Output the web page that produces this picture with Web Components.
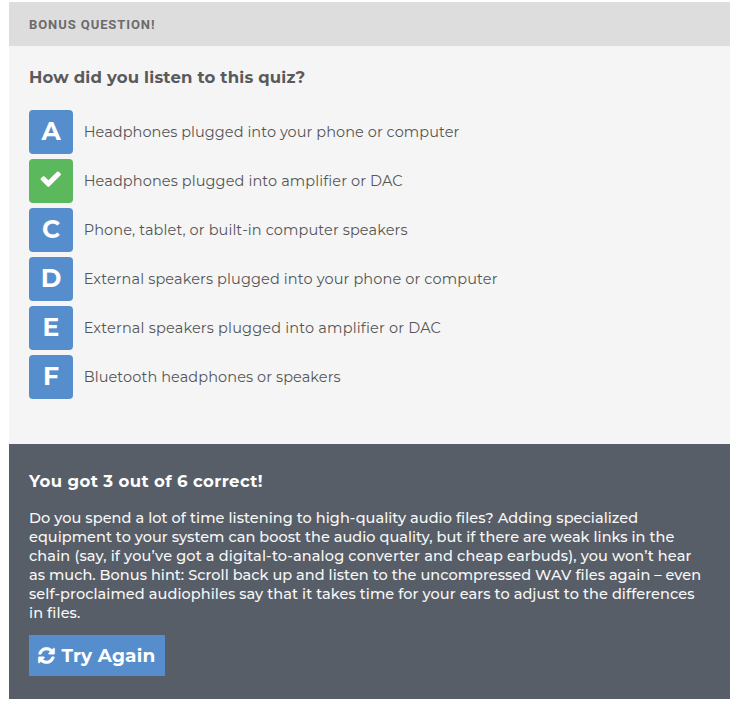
<!DOCTYPE html>
<html lang="en">
<head>
<meta charset="utf-8">
<title>Audio quality quiz</title>
<style>
    body {
        margin: 0;
        padding: 2px 3px 2px 9px;
        background: #fff;
        font-family: Montserrat, Inter, "Liberation Sans", sans-serif;
    }
</style>
</head>
<body>
<quiz-card>
    <span slot="label">BONUS QUESTION!</span>
    <span slot="question">How did you listen to this quiz?</span>
    <quiz-option letter="A" style="--track: .059px">Headphones plugged into your phone or computer</quiz-option>
    <quiz-option letter="B" picked style="--track: .11px">Headphones plugged into amplifier or DAC</quiz-option>
    <quiz-option letter="C" style="--track: .11px">Phone, tablet, or built-in computer speakers</quiz-option>
    <quiz-option letter="D" style="--track: .126px">External speakers plugged into your phone or computer</quiz-option>
    <quiz-option letter="E" style="--track: .18px">External speakers plugged into amplifier or DAC</quiz-option>
    <quiz-option letter="F" style="--track: .087px">Bluetooth headphones or speakers</quiz-option>
</quiz-card>
<quiz-result>
    <span slot="score">You got 3 out of 6 correct!</span>
    <span style="letter-spacing: .065px">Do you spend a lot of time listening to high-quality audio files? Adding specialized</span><br>
    <span style="letter-spacing: .037px">equipment to your system can boost the audio quality, but if there are weak links in the</span><br>
    <span style="letter-spacing: .14px">chain (say, if you’ve got a digital-to-analog converter and cheap earbuds), you won’t hear</span><br>
    <span style="letter-spacing: .042px">as much. Bonus hint: Scroll back up and listen to the uncompressed WAV files again – even</span><br>
    <span style="letter-spacing: .078px">self-proclaimed audiophiles say that it takes time for your ears to adjust to the differences</span><br>
    <span style="letter-spacing: .1px">in files.</span>
    <retry-button slot="action">Try Again</retry-button>
</quiz-result>

<script>
const cardTemplate = document.createElement("template");
cardTemplate.innerHTML = `
    <style>
        :host {
            display: flex;
            flex-direction: column;
            box-sizing: border-box;
            height: 442px;
            background: #f5f5f5;
        }
        header {
            box-sizing: border-box;
            height: 44px;
            padding: 0 20px;
            background: #dddddd;
            color: #6b6b6b;
            font: 700 13px/45px Roboto, sans-serif;
            letter-spacing: .92px;
        }
        h2 {
            margin: 20px 20px 22px;
            color: #5a5a5a;
            font-size: 16.5px;
            font-weight: 700;
            line-height: 22px;
            letter-spacing: .18px;
        }
        #options {
            display: flex;
            flex-direction: column;
            gap: 5px;
            padding: 0 20px;
        }
    </style>
    <header><slot name="label"></slot></header>
    <h2><slot name="question"></slot></h2>
    <div id="options"><slot></slot></div>
`;

class QuizCard extends HTMLElement {
    constructor() {
        super();
        this.attachShadow({mode: "open"}).appendChild(cardTemplate.content.cloneNode(true));
    }
}

const optionTemplate = document.createElement("template");
optionTemplate.innerHTML = `
    <style>
        :host {
            display: flex;
            align-items: center;
            gap: 10.7px;
            height: 44px;
            cursor: pointer;
        }
        #tile {
            display: flex;
            justify-content: center;
            align-items: center;
            flex: none;
            width: 44px;
            height: 44px;
            border-radius: 4px;
            background: #568ecd;
            color: #fff;
            font-size: 25px;
            font-weight: 700;
            line-height: 42px;
            padding-bottom: 2px;
            box-sizing: border-box;
        }
        :host([picked]) #tile {
            background: #5cb85c;
        }
        svg {
            width: 23.5px;
            height: 23.5px;
            margin-bottom: 3px;
            fill: #fff;
        }
        #text {
            color: #555;
            font-size: 14.5px;
            letter-spacing: var(--track, 0);
            white-space: nowrap;
        }
    </style>
    <div id="tile"></div>
    <div id="text"><slot></slot></div>
`;

const checkIcon = `<svg viewBox="0 0 1792 1792"><path d="M1671 566q0 40-28 68l-724 724-136 136q-28 28-68 28t-68-28l-136-136-362-362q-28-28-28-68t28-68l136-136q28-28 68-28t68 28l294 295 656-657q28-28 68-28t68 28l136 136q28 28 28 68z"/></svg>`;

class QuizOption extends HTMLElement {
    static get observedAttributes() {
        return ["letter", "picked"];
    }

    constructor() {
        super();
        this.attachShadow({mode: "open"}).appendChild(optionTemplate.content.cloneNode(true));
        this.tileElem = this.shadowRoot.getElementById("tile");
    }

    attributeChangedCallback() {
        // The picked option swaps its letter for a check mark
        if (this.hasAttribute("picked")) {
            this.tileElem.innerHTML = checkIcon;
        }
        else {
            this.tileElem.textContent = this.getAttribute("letter");
        }
    }
}

const resultTemplate = document.createElement("template");
resultTemplate.innerHTML = `
    <style>
        :host {
            display: block;
            box-sizing: border-box;
            height: 255px;
            padding: 26px 20px 0;
            background: #575e67;
            color: #fff;
        }
        h3 {
            margin: 0 0 17px;
            font-size: 16.5px;
            font-weight: 700;
            line-height: 22px;
            letter-spacing: .39px;
        }
        #message {
            margin-bottom: 12px;
            color: #f8f8f8;
            font-size: 14.5px;
            font-weight: 500;
            line-height: 19px;
            white-space: nowrap;
        }
    </style>
    <h3><slot name="score"></slot></h3>
    <div id="message"><slot></slot></div>
    <slot name="action"></slot>
`;

class QuizResult extends HTMLElement {
    constructor() {
        super();
        this.attachShadow({mode: "open"}).appendChild(resultTemplate.content.cloneNode(true));
    }
}

const retryTemplate = document.createElement("template");
retryTemplate.innerHTML = `
    <style>
        :host {
            display: block;
        }
        button {
            display: flex;
            align-items: center;
            gap: 5.5px;
            box-sizing: border-box;
            width: 136px;
            height: 41px;
            padding: 0 0 0 8px;
            border: 0;
            background: #568ecd;
            color: #fff;
            font: inherit;
            font-size: 18.5px;
            font-weight: 700;
            letter-spacing: .18px;
            white-space: nowrap;
            cursor: pointer;
        }
        svg {
            flex: none;
            width: 19px;
            height: 19px;
            fill: #fff;
            stroke: #fff;
            stroke-width: 50;
        }
    </style>
    <button>
        <svg viewBox="0 0 1792 1792"><path d="M1639 1056q0 5-1 7-64 268-268 434.5t-478 166.500q-146 0-282.500-55t-243.500-157l-129 129q-19 19-45 19t-45-19-19-45v-448q0-26 19-45t45-19h448q26 0 45 19t19 45-19 45l-137 137q71 66 161 102t187 36q134 0 250-65t186-179q11-17 53-117 8-23 30-23h192q13 0 22.500 9.500t9.500 22.500zm25-800v448q0 26-19 45t-45 19h-448q-26 0-45-19t-19-45 19-45l138-138q-148-137-349-137-134 0-250 65t-186 179q-11 17-53 117-8 23-30 23h-199q-13 0-22.500-9.500t-9.500-22.500v-7q65-268 270-434.500t480-166.500q146 0 284 55.500t245 156.500l130-129q19-19 45-19t45 19 19 45z"/></svg>
        <span><slot></slot></span>
    </button>
`;

class RetryButton extends HTMLElement {
    constructor() {
        super();
        this.attachShadow({mode: "open"}).appendChild(retryTemplate.content.cloneNode(true));
    }
}

customElements.define("quiz-card", QuizCard);
customElements.define("quiz-option", QuizOption);
customElements.define("quiz-result", QuizResult);
customElements.define("retry-button", RetryButton);
</script>
</body>
</html>
